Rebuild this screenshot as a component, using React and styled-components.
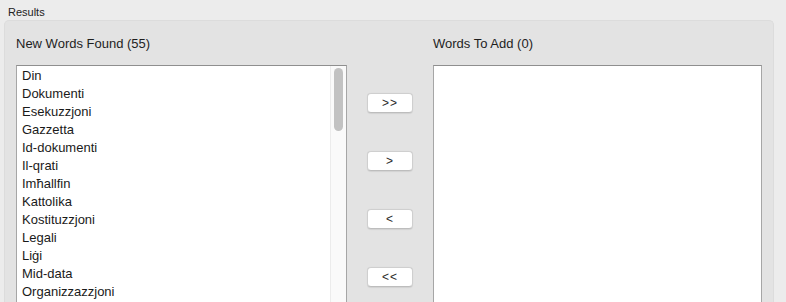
import styled, { createGlobalStyle } from "styled-components";

const GlobalStyle = createGlobalStyle`
  html, body {
    margin: 0;
    padding: 0;
    background: #ececec;
    overflow: hidden;
  }
  body {
    font-family: "Liberation Sans", Arial, sans-serif;
    color: #1d1d1d;
  }
`;

const newWords = [
  "Din",
  "Dokumenti",
  "Esekuzzjoni",
  "Gazzetta",
  "Id-dokumenti",
  "Il-qrati",
  "Imħallfin",
  "Kattolika",
  "Kostituzzjoni",
  "Legali",
  "Liġi",
  "Mid-data",
  "Organizzazzjoni",
];

const moveButtons = [">>", ">", "<", "<<"];

export default function App() {
  return (
    <>
      <GlobalStyle />
      <Page>
        <SectionLabel>Results</SectionLabel>
        <GroupBox>
          <Column>
            <Heading>New Words Found (55)</Heading>
            <ListBox>
              <Items>
                {newWords.map(word => (
                  <Item key={word}>{word}</Item>
                ))}
              </Items>
              <ScrollTrack>
                <ScrollThumb />
              </ScrollTrack>
            </ListBox>
          </Column>
          <ButtonColumn>
            {moveButtons.map(label => (
              <MoveButton key={label}>{label}</MoveButton>
            ))}
          </ButtonColumn>
          <Column $width="329px">
            <Heading>Words To Add (0)</Heading>
            <ListBox />
          </Column>
        </GroupBox>
      </Page>
    </>
  );
}

const Page = styled.div`
  width: 786px;
  height: 302px;
  padding: 5px 12px 0 4px;
  box-sizing: border-box;
  display: flex;
  flex-direction: column;
  overflow: hidden;
`;

const SectionLabel = styled.div`
  font-size: 11px;
  line-height: 14px;
  padding-left: 4px;
  height: 15px;
  color: #222;
`;

const GroupBox = styled.div`
  flex: 1;
  display: flex;
  background: #e3e3e3;
  border: 1px solid #dcdcdc;
  border-bottom: none;
  border-radius: 5px 5px 0 0;
  padding: 15px 11px 0 11px;
  min-height: 0;
`;

const Column = styled.div`
  display: flex;
  flex-direction: column;
  width: ${p => p.$width || "331px"};
  min-height: 0;
`;

const Heading = styled.div`
  font-size: 13px;
  line-height: 16px;
  height: 16px;
  margin-bottom: 13px;
  color: #1e1e1e;
`;

const ListBox = styled.div`
  flex: 1;
  min-height: 0;
  overflow: hidden;
  background: #fff;
  border: 1px solid #a6a6a6;
  border-top-color: #8f8f8f;
  border-bottom: none;
  display: flex;
`;

const Items = styled.ul`
  flex: 1;
  list-style: none;
  margin: 0;
  padding: 1px 0 0 5px;
`;

const Item = styled.li`
  font-size: 13px;
  line-height: 18px;
  height: 18px;
  color: #1a1a1a;
`;

const ScrollTrack = styled.div`
  width: 15px;
  background: #fafafa;
  border-left: 1px solid #ececec;
  display: flex;
  justify-content: center;
  padding-top: 2px;
`;

const ScrollThumb = styled.div`
  width: 9px;
  height: 63px;
  border-radius: 5px;
  background: #c2c2c2;
`;

const ButtonColumn = styled.div`
  width: 86px;
  display: flex;
  flex-direction: column;
  align-items: center;
  padding-top: 57px;
  gap: 38px;
`;

const MoveButton = styled.button`
  width: 46px;
  height: 20px;
  padding: 0;
  background: #fff;
  border: 1px solid #cfcfcf;
  border-bottom-color: #bdbdbd;
  border-radius: 4px;
  box-shadow: 0 0.5px 1px rgba(0, 0, 0, 0.08);
  font-family: "Liberation Sans", Arial, sans-serif;
  font-size: 12px;
  line-height: 18px;
  color: #2a2a2a;
  letter-spacing: 1px;
`;
